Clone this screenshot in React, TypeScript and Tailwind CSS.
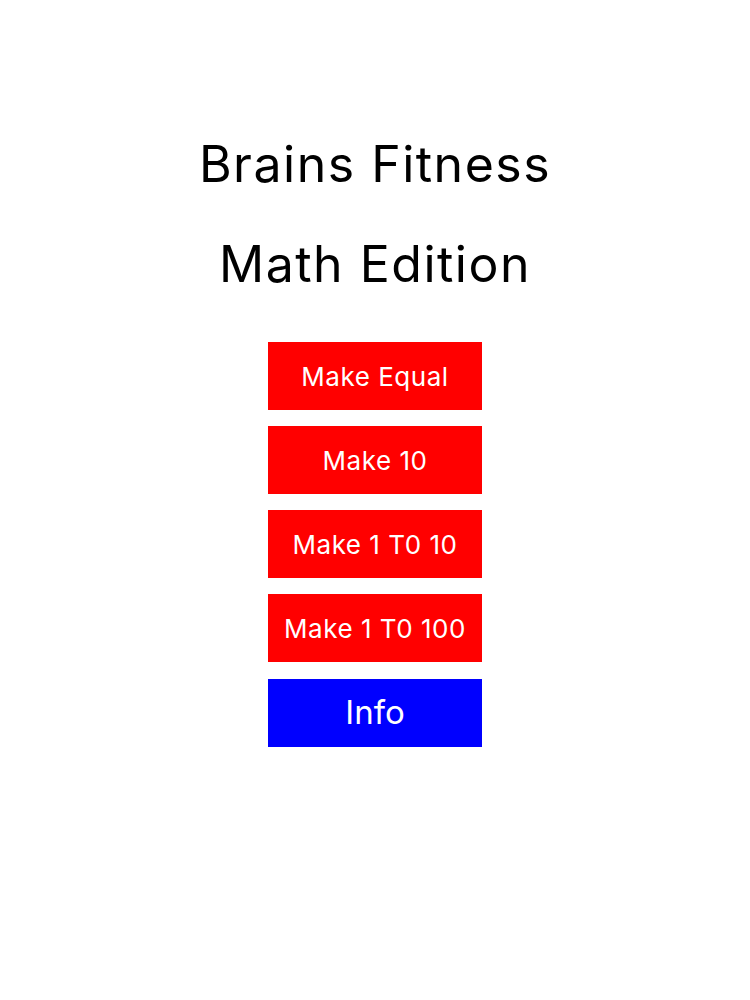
const games = ["Make Equal", "Make 10", "Make 1 T0 10", "Make 1 T0 100"];

export default function App() {
  return (
    <div className="min-h-[1000px] w-full bg-white flex flex-col items-center pt-[114px] font-['Inter','Liberation_Sans',sans-serif]">
      <h1 className="text-[50px] leading-[100px] tracking-[0.03em] font-normal text-black text-center">
        <div>Brains Fitness</div>
        <div>Math Edition</div>
      </h1>

      <div className="mt-[28px] flex flex-col gap-[16px]">
        {games.map((name) => (
          <button
            key={name}
            type="button"
            className="w-[214px] h-[68px] bg-[#ff0000] text-white text-[26px] tracking-[0.02em] flex items-center justify-center"
          >
            {name}
          </button>
        ))}
        <button
          type="button"
          className="w-[214px] h-[68px] mt-px bg-[#0000ff] text-white text-[33px] flex items-center justify-center"
        >
          Info
        </button>
      </div>
    </div>
  );
}
